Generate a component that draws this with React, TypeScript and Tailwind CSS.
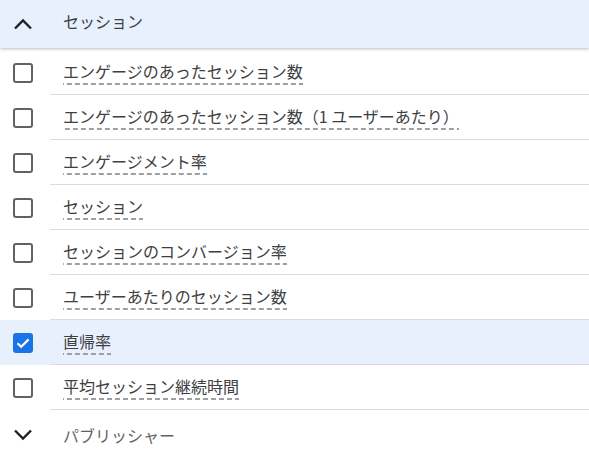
import React from "react";

const items = [
  { label: "エンゲージのあったセッション数", checked: false },
  { label: "エンゲージのあったセッション数（1 ユーザーあたり）", checked: false },
  { label: "エンゲージメント率", checked: false },
  { label: "セッション", checked: false },
  { label: "セッションのコンバージョン率", checked: false },
  { label: "ユーザーあたりのセッション数", checked: false },
  { label: "直帰率", checked: true },
  { label: "平均セッション継続時間", checked: false },
];

function Chevron({ up }: { up?: boolean }) {
  return (
    <svg width="20" height="12" viewBox="0 0 20 12" className="text-[#202124]">
      <path
        d={up ? "M2 10.5 10 2.5l8 8" : "M2 1.5l8 8 8-8"}
        fill="none"
        stroke="currentColor"
        strokeWidth="2.4"
      />
    </svg>
  );
}

function Checkbox({ checked }: { checked: boolean }) {
  if (checked) {
    return (
      <div className="w-[20px] h-[20px] rounded-[3px] bg-[#1a73e8] flex items-center justify-center">
        <svg width="16" height="16" viewBox="0 0 16 16">
          <path d="M2.5 8.2 6.2 11.8 13.6 4.4" fill="none" stroke="#fff" strokeWidth="2.2" />
        </svg>
      </div>
    );
  }
  return <div className="w-[20px] h-[20px] rounded-[3px] border-2 border-[#5f6368]" />;
}

export default function App() {
  return (
    <div className="w-[589px] h-[463px] bg-white overflow-hidden font-['Noto_Sans_CJK_JP','Noto_Sans',sans-serif]">
      {/* Header */}
      <div className="relative z-10 h-[48px] bg-[#e8f0fe] flex items-center shadow-[0_1px_3px_rgba(60,64,67,0.35)]">
        <div className="w-[50px] pl-[13px] pb-[1px]">
          <Chevron up />
        </div>
        <span className="pl-[13px] pb-[6px] text-[16px] text-[#3c4043]">セッション</span>
      </div>

      {/* Items */}
      <div className="pt-[2px]">
        {items.map((item) => (
          <div key={item.label} className={`flex h-[45px] ${item.checked ? "bg-[#e8f0fe]" : ""}`}>
            <div className="w-[50px] flex items-center pl-[13px]">
              <Checkbox checked={item.checked} />
            </div>
            <div className="flex-1 flex items-center pl-[13px] border-b border-[#dadce0]">
              <span className="text-[16px] leading-[22px] text-[#3c4043] pb-[3px] bg-[linear-gradient(to_right,#9aa0a6_62%,transparent_0)] bg-[length:8px_2px] bg-repeat-x bg-bottom">
                {item.label}
              </span>
            </div>
          </div>
        ))}
      </div>

      {/* Collapsed group */}
      <div className="flex h-[50px] items-center">
        <div className="w-[50px] pl-[13px]">
          <Chevron />
        </div>
        <span className="pl-[13px] text-[16px] text-[#5f6368]">パブリッシャー</span>
      </div>
    </div>
  );
}
